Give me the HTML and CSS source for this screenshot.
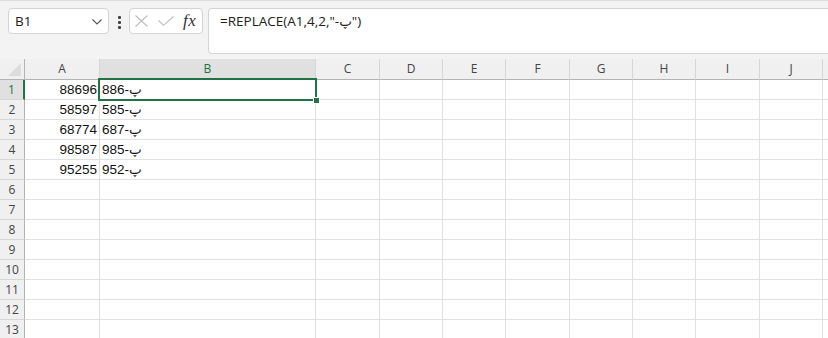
FILE: index.html
```html
<!DOCTYPE html>
<html lang="en">
<head>
    <meta charset="UTF-8">
    <title>Sheet1</title>
    <link rel="stylesheet" href="styles.css">
</head>
<body>
    <div class="toolbar">
        <div class="name-box">
            <span>B1</span>
            <svg class="chevron" width="10" height="6" viewBox="0 0 10 6"><path d="M0.5 0.5 L5 5 L9.5 0.5" fill="none" stroke="#555" stroke-width="1.1"/></svg>
        </div>
        <div class="more-dots"><i></i><i></i><i></i></div>
        <div class="fx-box">
            <svg width="13" height="12" viewBox="0 0 13 12"><path d="M0.5 0.5 L12.5 11.5 M12.5 0.5 L0.5 11.5" stroke="#bdbdbd" stroke-width="1.1" fill="none"/></svg>
            <svg width="16" height="10" viewBox="0 0 16 10"><path d="M0.5 4.5 L5.5 9.3 L15.5 0.5" stroke="#bdbdbd" stroke-width="1.1" fill="none"/></svg>
            <span class="fx">fx</span>
        </div>
        <div class="formula-bar">=REPLACE(A1,4,2,"-پ")</div>
    </div>

    <div class="sheet">
        <div class="row head-row">
            <div class="corner"><span class="tri"></span></div>
            <div class="col-head c-a">A</div>
            <div class="col-head c-b active">B</div>
            <div class="col-head c-c">C</div>
            <div class="col-head c-d">D</div>
            <div class="col-head c-e">E</div>
            <div class="col-head c-f">F</div>
            <div class="col-head c-g">G</div>
            <div class="col-head c-h">H</div>
            <div class="col-head c-i">I</div>
            <div class="col-head c-j">J</div>
            <div class="col-head c-k"></div>
        </div>
        <div id="rows"></div>

        <div class="selection"><span class="handle"></span></div>
    </div>

    <script>
        const data = [
            ['88696', '886-پ'],
            ['58597', '585-پ'],
            ['68774', '687-پ'],
            ['98587', '985-پ'],
            ['95255', '952-پ']
        ];
        const cols = ['c-a', 'c-b', 'c-c', 'c-d', 'c-e', 'c-f', 'c-g', 'c-h', 'c-i', 'c-j', 'c-k'];
        const rows = document.getElementById('rows');

        for (let r = 1; r <= 13; r++) {
            const row = document.createElement('div');
            row.className = 'row';
            const num = document.createElement('div');
            num.className = 'row-head' + (r === 1 ? ' active' : '');
            num.textContent = r;
            row.appendChild(num);
            cols.forEach((c, i) => {
                const cell = document.createElement('div');
                cell.className = 'cell ' + c + (i === 0 ? ' num' : '');
                if (data[r - 1] && i < 2) cell.textContent = data[r - 1][i];
                row.appendChild(cell);
            });
            rows.appendChild(row);
        }
    </script>
</body>
</html>
```

FILE: styles.css
```css
* {
    margin: 0;
    padding: 0;
    box-sizing: border-box;
}

body {
    background: #f3f3f3;
    font-family: 'Open Sans', 'DejaVu Sans', sans-serif;
    width: 828px;
    height: 338px;
    overflow: hidden;
}

/* formula bar area */
.toolbar {
    height: 60px;
    display: flex;
    align-items: flex-start;
    padding: 7px 0 0 8px;
    border-top: 1px solid #dedede;
}

.name-box {
    width: 101px;
    height: 26px;
    background: white;
    border: 1px solid #d4d4d4;
    border-radius: 4px;
    display: flex;
    align-items: center;
    justify-content: space-between;
    padding: 0 6px 0 6px;
    font-size: 13.5px;
    color: #222;
}

.chevron {
    margin-top: 1px;
}

.more-dots {
    width: 20px;
    display: flex;
    flex-direction: column;
    align-items: center;
    gap: 2px;
    padding-top: 8px;
}

.more-dots i {
    width: 3px;
    height: 3px;
    background: #444;
    border-radius: 1px;
}

.fx-box {
    width: 74px;
    height: 26px;
    background: white;
    border: 1px solid #d4d4d4;
    border-radius: 4px;
    display: flex;
    align-items: center;
    padding-left: 5px;
    gap: 10px;
}

.fx {
    font-family: 'Liberation Serif', 'DejaVu Serif', serif;
    font-style: italic;
    font-size: 17px;
    color: #333;
    margin-left: -1px;
    letter-spacing: 0.5px;
}

.formula-bar {
    flex: 1;
    height: 46px;
    margin-left: 5px;
    background: white;
    border: 1px solid #d4d4d4;
    border-right: none;
    border-radius: 4px 0 0 4px;
    padding: 3px 0 0 11px;
    font-size: 13.5px;
    color: #222;
}

/* sheet grid */
.sheet {
    position: relative;
    background: white;
}

.row {
    display: flex;
    height: 20px;
}

.head-row {
    height: 21px;
    background: #f0f0f0;
    margin-top: -1px;
}

.row > div {
    border-right: 1px solid #e1e1e1;
    border-bottom: 1px solid #e1e1e1;
    flex-shrink: 0;
}

.head-row > div {
    border-right: 1px solid #d6d6d6;
    border-bottom: 1px solid #b3b3b3;
    font-size: 12px;
    color: #444;
    text-align: center;
    line-height: 20px;
}

.corner {
    width: 25px;
    position: relative;
}

.head-row .corner {
    border-right-color: #b3b3b3;
}

.tri {
    position: absolute;
    right: 3px;
    bottom: 3px;
    width: 0;
    height: 0;
    border-left: 13px solid transparent;
    border-bottom: 13px solid #dcdcdc;
}

.col-head.active {
    background: #e0e0e0;
    color: #217346;
    border-bottom: 2px solid #217346;
}

.row-head {
    width: 25px;
    background: #f0f0f0;
    font-size: 12px;
    color: #444;
    text-align: center;
    line-height: 20px;
}

.row .row-head {
    border-right-color: #b3b3b3;
    border-bottom-color: #d6d6d6;
}

.row .row-head.active {
    background: #e0e0e0;
    color: #217346;
    border-right: 2px solid #217346;
}

.c-a { width: 75px; }
.c-b { width: 216px; }
.c-c { width: 64px; }
.c-d { width: 63px; }
.c-e { width: 63px; }
.c-f { width: 64px; }
.c-g { width: 63px; }
.c-h { width: 63px; }
.c-i { width: 64px; }
.c-j { width: 63px; }
.c-k { width: 40px; }

.cell {
    font-family: 'Liberation Sans', 'DejaVu Sans', sans-serif;
    font-size: 13.5px;
    color: #111;
    line-height: 20px;
    padding: 0 2px;
    white-space: nowrap;
}

.cell.num {
    text-align: right;
}

.selection {
    position: absolute;
    left: 98px;
    top: 19px;
    width: 219px;
    height: 23px;
    border: 2px solid #217346;
}

.handle {
    position: absolute;
    right: -5px;
    bottom: -5px;
    width: 7px;
    height: 7px;
    background: #217346;
    border: 1px solid white;
}
```
